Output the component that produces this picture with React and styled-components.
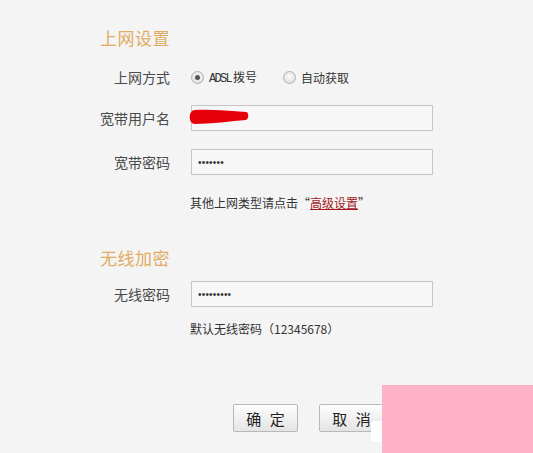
import React from "react";
import styled, { createGlobalStyle } from "styled-components";

const Global = createGlobalStyle`
  html, body { margin: 0; padding: 0; background: #f4f4f4; }
  body { font-family: "Noto Sans CJK SC", "Liberation Sans", sans-serif; color: #3a3a3a; }
  #root { min-height: 453px; }
`;

const Page = styled.div`
  position: relative;
  width: 533px;
  height: 453px;
  overflow: hidden;
  box-sizing: border-box;
  padding: 28px 0 0 90px;
  display: flex;
  flex-direction: column;
`;

const Heading = styled.h2`
  margin: ${(p) => p.$mt || 0}px 0 0 10px;
  font-size: 17px;
  line-height: 20px;
  height: 20px;
  font-weight: normal;
  color: #e0ad62;
  letter-spacing: 0.5px;
`;

const Row = styled.div`
  display: flex;
  align-items: center;
  gap: 21px;
  height: 26px;
  margin-top: ${(p) => p.$mt}px;
`;

const Label = styled.div`
  width: 80px;
  text-align: right;
  font-size: 14px;
  color: #4a4a4a;
  white-space: nowrap;
`;

const RadioGroup = styled.div`
  display: flex;
  align-items: center;
  gap: 26px;
`;

const RadioItem = styled.label`
  display: flex;
  align-items: center;
  gap: 5px;
  font-size: 12px;
  color: #333;
`;

const RadioDot = styled.span`
  width: 11px;
  height: 11px;
  border-radius: 50%;
  border: 1px solid #b0b0b0;
  background: radial-gradient(circle at 50% 40%, #fafafa 0%, #d8d8d8 100%);
  display: inline-flex;
  align-items: center;
  justify-content: center;
  &::after {
    content: "";
    width: 5px;
    height: 5px;
    border-radius: 50%;
    background: ${(p) => (p.$checked ? "#555" : "transparent")};
  }
`;

const Mono = styled.span`
  font-family: "Liberation Mono", monospace;
  font-size: 12px;
  letter-spacing: -1.7px;
  margin-right: 2px;
`;

const FieldWrap = styled.div`
  position: relative;
`;

const Field = styled.div`
  width: 242px;
  height: 26px;
  box-sizing: border-box;
  border: 1px solid #c6c6c6;
  background: #f7f7f7;
  display: flex;
  align-items: center;
  padding-left: 6px;
  font-family: "Liberation Sans", sans-serif;
  font-size: 10px;
  letter-spacing: 0.2px;
  color: #333;
`;

const Scribble = styled.svg`
  position: absolute;
  left: -3px;
  top: 4px;
`;

const Hint = styled.div`
  margin: ${(p) => p.$mt}px 0 0 100px;
  font-size: 12px;
  line-height: 18px;
  color: #333;
`;

const Link = styled.a`
  color: #a3161c;
  text-decoration: underline;
`;

const Buttons = styled.div`
  display: flex;
  gap: 21px;
  margin: 66px 0 0 143px;
`;

const Button = styled.button`
  width: 65px;
  height: 28px;
  box-sizing: border-box;
  border: 1px solid #b8b8b8;
  border-radius: 2px;
  background: linear-gradient(#fefefe, #e4e4e4);
  font-family: "Noto Sans CJK SC", sans-serif;
  font-size: 15px;
  color: #222;
  padding: 0;
  word-spacing: 5px;
`;

const PinkMark = styled.div`
  position: absolute;
  left: 382px;
  top: 385px;
  width: 151px;
  height: 68px;
  background: #ffb1c8;
`;

const WhiteMark = styled.div`
  position: absolute;
  left: 371px;
  top: 421px;
  width: 11px;
  height: 21px;
  background: #ffffff;
  border-radius: 3px 0 0 3px;
`;

export default function App() {
  return (
    <>
      <Global />
      <Page>
        <Heading>上网设置</Heading>
        <Row $mt={16}>
          <Label>上网方式</Label>
          <RadioGroup>
            <RadioItem>
              <RadioDot $checked />
              <span>
                <Mono>ADSL</Mono>拨号
              </span>
            </RadioItem>
            <RadioItem>
              <RadioDot />
              <span>自动获取</span>
            </RadioItem>
          </RadioGroup>
        </Row>
        <Row $mt={15}>
          <Label>宽带用户名</Label>
          <FieldWrap>
            <Field />
            <Scribble width="62" height="17" viewBox="0 0 62 17">
              <path
                d="M7 1 C22 0 42 2 58 3 C61 3 61 10 58 11 C44 12 22 15 7 15 C0 15 0 1 7 1 Z"
                fill="#e6000a"
              />
            </Scribble>
          </FieldWrap>
        </Row>
        <Row $mt={18}>
          <Label>宽带密码</Label>
          <Field>•••••••</Field>
        </Row>
        <Hint $mt={19}>
          其他上网类型请点击“<Link>高级设置</Link>”
        </Hint>
        <Heading $mt={36}>无线加密</Heading>
        <Row $mt={13}>
          <Label>无线密码</Label>
          <Field>•••••••••</Field>
        </Row>
        <Hint $mt={13}>默认无线密码（12345678）</Hint>
        <Buttons>
          <Button>确 定</Button>
          <Button>取 消</Button>
        </Buttons>
        <WhiteMark />
        <PinkMark />
      </Page>
    </>
  );
}
